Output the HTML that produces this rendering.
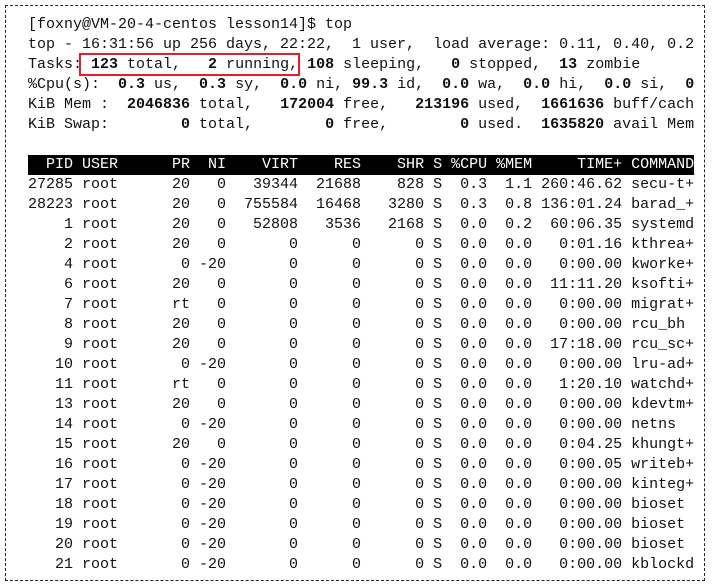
<!DOCTYPE html>
<html><head><meta charset="utf-8"><style>
html,body{margin:0;padding:0;background:#fff;}
body{width:713px;height:588px;position:relative;overflow:hidden;}
.frame{position:absolute;left:5px;top:5px;width:700px;height:576px;border:1px dashed #222;box-sizing:border-box;}
pre{position:absolute;left:28px;top:15px;margin:0;font-family:"Liberation Mono",monospace;font-size:15px;line-height:20px;color:#111;width:666px;overflow:hidden;white-space:pre;}
b{font-weight:bold;}
.hd{background:#000;color:#fff;display:inline-block;width:666px;}
.box{position:absolute;left:79px;top:53px;width:221px;height:23px;border:2px solid #e0202a;box-sizing:border-box;}
</style></head><body>
<div class="frame"></div>
<pre>[foxny@VM-20-4-centos lesson14]$ top
top - 16:31:56 up 256 days, 22:22,  1 user,  load average: 0.11, 0.40, 0.2
Tasks: <b>123</b> total,   <b>2</b> running, <b>108</b> sleeping,   <b>0</b> stopped,  <b>13</b> zombie
%Cpu(s):  <b>0.3</b> us,  <b>0.3</b> sy,  <b>0.0</b> ni, <b>99.3</b> id,  <b>0.0</b> wa,  <b>0.0</b> hi,  <b>0.0</b> si,  <b>0</b>
KiB Mem :  <b>2046836</b> total,   <b>172004</b> free,   <b>213196</b> used,  <b>1661636</b> buff/cach
KiB Swap:        <b>0</b> total,        <b>0</b> free,        <b>0</b> used.  <b>1635820</b> avail Mem

<span class="hd">  PID USER      PR  NI    VIRT    RES    SHR S %CPU %MEM     TIME+ COMMAND</span>
27285 root      20   0   39344  21688    828 S  0.3  1.1 260:46.62 secu-t+
28223 root      20   0  755584  16468   3280 S  0.3  0.8 136:01.24 barad_+
    1 root      20   0   52808   3536   2168 S  0.0  0.2  60:06.35 systemd
    2 root      20   0       0      0      0 S  0.0  0.0   0:01.16 kthrea+
    4 root       0 -20       0      0      0 S  0.0  0.0   0:00.00 kworke+
    6 root      20   0       0      0      0 S  0.0  0.0  11:11.20 ksofti+
    7 root      rt   0       0      0      0 S  0.0  0.0   0:00.00 migrat+
    8 root      20   0       0      0      0 S  0.0  0.0   0:00.00 rcu_bh
    9 root      20   0       0      0      0 S  0.0  0.0  17:18.00 rcu_sc+
   10 root       0 -20       0      0      0 S  0.0  0.0   0:00.00 lru-ad+
   11 root      rt   0       0      0      0 S  0.0  0.0   1:20.10 watchd+
   13 root      20   0       0      0      0 S  0.0  0.0   0:00.00 kdevtm+
   14 root       0 -20       0      0      0 S  0.0  0.0   0:00.00 netns
   15 root      20   0       0      0      0 S  0.0  0.0   0:04.25 khungt+
   16 root       0 -20       0      0      0 S  0.0  0.0   0:00.05 writeb+
   17 root       0 -20       0      0      0 S  0.0  0.0   0:00.00 kinteg+
   18 root       0 -20       0      0      0 S  0.0  0.0   0:00.00 bioset
   19 root       0 -20       0      0      0 S  0.0  0.0   0:00.00 bioset
   20 root       0 -20       0      0      0 S  0.0  0.0   0:00.00 bioset
   21 root       0 -20       0      0      0 S  0.0  0.0   0:00.00 kblockd</pre>
<div class="box"></div>
</body></html>
